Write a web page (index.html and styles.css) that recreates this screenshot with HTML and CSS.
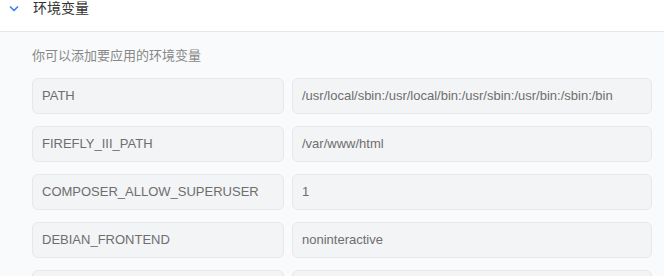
FILE: index.html
```html
<!DOCTYPE html>
<html lang="zh-CN">
<head>
    <meta charset="UTF-8">
    <title>环境变量</title>
    <link rel="stylesheet" href="styles.css">
</head>
<body>
    <div class="section-head">
        <svg class="chevron" width="10" height="8" viewBox="0 0 10 8"><path d="M1.5 2 L5 5.5 L8.5 2" fill="none" stroke="#3b82f6" stroke-width="1.7" stroke-linecap="round" stroke-linejoin="round"/></svg>
        <span class="section-title">环境变量</span>
    </div>
    <section class="env-panel">
        <p class="env-desc">你可以添加要应用的环境变量</p>
        <div class="env-list">
            <div class="env-row"><div class="env-input">PATH</div><div class="env-input">/usr/local/sbin:/usr/local/bin:/usr/sbin:/usr/bin:/sbin:/bin</div></div>
            <div class="env-row"><div class="env-input">FIREFLY_III_PATH</div><div class="env-input">/var/www/html</div></div>
            <div class="env-row"><div class="env-input">COMPOSER_ALLOW_SUPERUSER</div><div class="env-input">1</div></div>
            <div class="env-row"><div class="env-input">DEBIAN_FRONTEND</div><div class="env-input">noninteractive</div></div>
            <div class="env-row"><div class="env-input"></div><div class="env-input"></div></div>
        </div>
    </section>
</body>
</html>
```
FILE: styles.css
```css
* { margin: 0; padding: 0; box-sizing: border-box; }
body { font-family: "Liberation Sans", "Noto Sans CJK SC", sans-serif; background: #f9fafb; overflow: hidden; }
.section-head { display: flex; align-items: flex-start; height: 32px; background: #fff; border-bottom: 1px solid #e5e7eb; padding: 0 0 0 9px; }
.chevron { margin-top: 5px; }
.section-title { margin-left: 14px; font-size: 14px; line-height: 17px; color: #333; }
.env-panel { padding: 15px 12px 0 32px; }
.env-desc { font-size: 13px; line-height: 17px; color: #888; margin-bottom: 14px; }
.env-list { display: flex; flex-direction: column; gap: 12px; }
.env-row { display: flex; gap: 8px; }
.env-input { height: 36px; line-height: 34px; padding: 0 9px; font-size: 13px; color: #6e6e6e; background: #f3f4f6; border: 1px solid #e5e7eb; border-radius: 6px; white-space: nowrap; overflow: hidden; }
.env-row .env-input:first-child { width: 252px; flex: none; }
.env-row .env-input:last-child { flex: 1; }
```
